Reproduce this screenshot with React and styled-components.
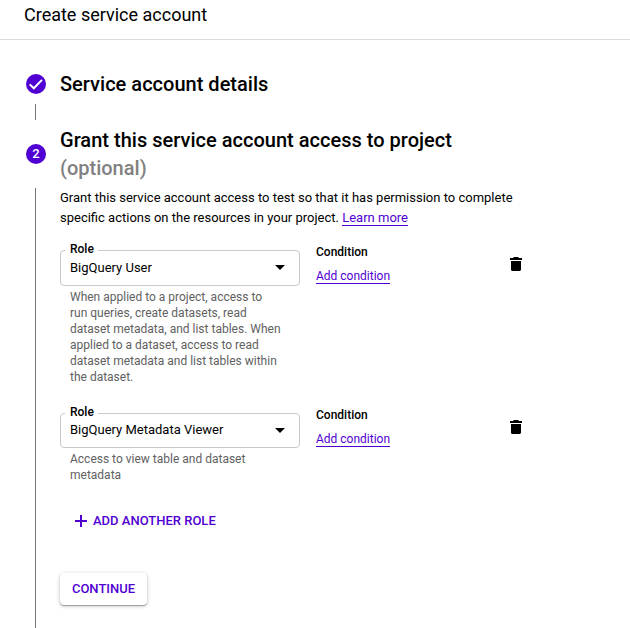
import React from "react";
import styled, { createGlobalStyle } from "styled-components";

const accent = "#5000d2";

const GlobalStyle = createGlobalStyle`
  *, *::before, *::after { box-sizing: border-box; }
  html, body { margin: 0; height: 100%; overflow: hidden; background: #fff; }
  body { font-family: Roboto, sans-serif; color: #000; }
  #root { height: 100%; }
`;

const Page = styled.div`
  display: flex;
  flex-direction: column;
  width: 630px;
  height: 628px;
  overflow: hidden;
`;

const Header = styled.header`
  flex: none;
  height: 40px;
  padding: 3px 24px 0;
  border-bottom: 1px solid #dadce0;
  font-size: 18px;
  line-height: 24px;
`;

const Stepper = styled.main`
  flex: 1;
  display: flex;
  flex-direction: column;
  padding: 30px 24px 0 26px;
`;

const Step = styled.section`
  display: grid;
  grid-template-columns: 20px 1fr;
  column-gap: 14px;
  flex: ${(p) => (p.$grow ? "1" : "none")};
`;

const Rail = styled.div`
  display: flex;
  flex-direction: column;
  align-items: center;
  padding-top: ${(p) => p.$top}px;
`;

const Badge = styled.span`
  display: flex;
  align-items: center;
  justify-content: center;
  width: 20px;
  height: 20px;
  margin-top: 4px;
  border-radius: 50%;
  background: ${accent};
  color: #fff;
  font-size: 13px;
  font-weight: 500;
  line-height: 20px;
`;

const Connector = styled.span`
  width: 1px;
  margin: ${(p) => (p.$gap)}px 1px 0 0;
  background: #757575;
  ${(p) => (p.$length ? `height: ${p.$length}px;` : "flex: 1;")}
`;

const Heading = styled.h2`
  margin: 0;
  font-size: 20px;
  font-weight: 500;
  line-height: 28px;
  letter-spacing: 0.015px;
`;

const Optional = styled.div`
  color: #808080;
  font-size: 20px;
  font-weight: 500;
  line-height: 28px;
`;

const Description = styled.p`
  width: 470px;
  margin: 6px 0 0;
  font-size: 13px;
  line-height: 20px;
`;

const Link = styled.a`
  color: ${accent};
  border-bottom: 1px solid ${accent};
`;

const RoleRow = styled.div`
  display: grid;
  grid-template-columns: 240px 184px auto;
  column-gap: 16px;
  align-items: start;
  height: ${(p) => p.$height}px;
`;

const Field = styled.fieldset`
  display: block;
  min-width: 0;
  margin: 0;
  padding: 0;
  border: 0;
`;

const SelectBox = styled.div`
  position: relative;
  display: flex;
  align-items: center;
  justify-content: space-between;
  height: ${(p) => p.$height}px;
  padding: 0 14px 1px 9px;
  border: 1px solid #c9c9c9;
  border-radius: 4px;
  font-size: 13px;
  line-height: 20px;
`;

const FloatingLabel = styled.span`
  position: absolute;
  top: -10px;
  left: 4px;
  padding: 0 4px 0 5px;
  background: #fff;
  font-size: 12px;
  font-weight: 500;
  line-height: 16px;
`;

const Hint = styled.p`
  width: 211px;
  margin: 3px 0 0 10px;
  color: #616161;
  font-size: 12px;
  line-height: 16px;
`;

const Condition = styled.div`
  display: flex;
  flex-direction: column;
  align-items: flex-start;
  gap: 9px;
  margin-top: -6px;
  font-size: 12px;
  line-height: 16px;
`;

const ConditionTitle = styled.span`
  font-weight: 500;
`;

const ConditionLink = styled(Link)`
  height: 15px;
  line-height: 15px;
`;

const DeleteButton = styled.button`
  display: flex;
  margin: 7px 0 0 -6px;
  padding: 0;
  border: 0;
  background: none;
`;

const AddRole = styled.button`
  display: flex;
  align-items: center;
  gap: 6px;
  height: 20px;
  margin-left: 15px;
  padding: 0;
  border: 0;
  background: none;
  color: ${accent};
  font: 500 13px/20px Roboto, sans-serif;
`;

const Continue = styled.button`
  display: block;
  width: 87px;
  height: 32px;
  margin-top: 42px;
  padding: 0;
  border: 0;
  border-radius: 4px;
  background: #fff;
  color: ${accent};
  font: 500 13px/32px Roboto, sans-serif;
  box-shadow: 0 1px 1px rgba(0, 0, 0, 0.3), 0 1px 4px rgba(0, 0, 0, 0.22);
`;

const CheckIcon = () => (
  <svg width="20" height="20" viewBox="0 0 20 20" fill="none">
    <path d="M3.7 10.4 7.8 14.3 16 5.9" stroke="#fff" strokeWidth="2" />
  </svg>
);

const CaretIcon = () => (
  <svg width="10" height="5" viewBox="0 0 10 5">
    <path d="M0 0h10L5 5z" />
  </svg>
);

const TrashIcon = () => (
  <svg width="12" height="14" viewBox="0 0 12 14">
    <path d="M4 0h4l1 1h3v2H0V1h3zM1 4h10v8.5c0 .8-.7 1.5-1.5 1.5h-7C1.700 14 1 13.300 1 12.500z" />
  </svg>
);

const PlusIcon = () => (
  <svg width="12" height="12" viewBox="0 0 12 12" fill={accent}>
    <path d="M5 0h2v5h5v2H7v5H5V7H0V5h5z" />
  </svg>
);

const roles = [
  {
    name: "BigQuery User",
    hint: "When applied to a project, access to run queries, create datasets, read dataset metadata, and list tables. When applied to a dataset, access to read dataset metadata and list tables within the dataset.",
    boxHeight: 36,
    rowHeight: 163,
  },
  {
    name: "BigQuery Metadata Viewer",
    hint: "Access to view table and dataset metadata",
    boxHeight: 35,
    rowHeight: 98,
  },
];

const Roles = styled.div`
  margin-top: 22px;
`;

const StepBody = styled.div`
  padding-top: ${(p) => p.$top}px;
`;

function Role({ role }) {
  return (
    <RoleRow $height={role.rowHeight}>
      <Field>
        <SelectBox $height={role.boxHeight}>
          <FloatingLabel>Role</FloatingLabel>
          {role.name}
          <CaretIcon />
        </SelectBox>
        <Hint>{role.hint}</Hint>
      </Field>
      <Condition>
        <ConditionTitle>Condition</ConditionTitle>
        <ConditionLink>Add condition</ConditionLink>
      </Condition>
      <DeleteButton aria-label="Delete role">
        <TrashIcon />
      </DeleteButton>
    </RoleRow>
  );
}

export default function App() {
  return (
    <Page>
      <GlobalStyle />
      <Header>Create service account</Header>
      <Stepper>
        <Step>
          <Rail $top={0}>
            <Badge><CheckIcon /></Badge>
            <Connector $gap={10} $length={16} />
          </Rail>
          <Heading>Service account details</Heading>
        </Step>
        <Step $grow>
          <Rail $top={20}>
            <Badge>2</Badge>
            <Connector $gap={24} />
          </Rail>
          <StepBody $top={6}>
            <Heading>Grant this service account access to project</Heading>
            <Optional>(optional)</Optional>
            <Description>
              Grant this service account access to test so that it has permission to complete
              specific actions on the resources in your project. <Link>Learn more</Link>
            </Description>
            <Roles>
              {roles.map((role) => (
                <Role key={role.name} role={role} />
              ))}
            </Roles>
            <AddRole><PlusIcon />ADD ANOTHER ROLE</AddRole>
            <Continue>CONTINUE</Continue>
          </StepBody>
        </Step>
      </Stepper>
    </Page>
  );
}
